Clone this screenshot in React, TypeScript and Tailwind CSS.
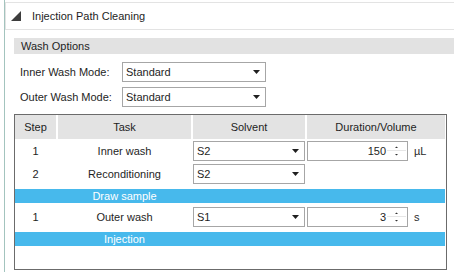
import React from 'react';

const Caret: React.FC = () => (
    <svg width="7" height="4" viewBox="0 0 7 4" className="shrink-0">
        <path d="M0 0H7L3.5 4Z" fill="#1f1f1f" />
    </svg>
);

const Select: React.FC<{ value: string; className?: string }> = ({ value, className = '' }) => (
    <div className={`h-[20px] border border-[#a6a6a6] bg-white flex items-center justify-between pl-[3px] pr-[5px] ${className}`}>
        <span>{value}</span>
        <Caret />
    </div>
);

const Spinner: React.FC<{ value: string; unit: string }> = ({ value, unit }) => (
    <div className="flex items-center">
        <div className="relative w-[101px] h-[20px] border border-[#a6a6a6] bg-white flex items-center justify-end pr-[21px]">
            <span>{value}</span>
            <div className="absolute right-[1px] top-[8px] w-[19px] h-px bg-[#e6e6e6]" />
            <svg width="5" height="14" viewBox="0 0 5 14" className="absolute right-[8px] top-[2px]">
                <path d="M1 4H4L2.5 2.5Z" fill="#333" />
                <path d="M1 10H4L2.5 11.5Z" fill="#333" />
            </svg>
        </div>
        <span className="ml-[6px] text-[#2b2b2b]">{unit}</span>
    </div>
);

const Band: React.FC<{ label: string }> = ({ label }) => (
    <div className="h-[14px] bg-[#47b9ec] text-white flex items-center leading-none">
        <div className="w-[43px]" />
        <div className="w-[133px] text-center">{label}</div>
    </div>
);

export default function App() {
    return (
        <div
            className="w-[454px] h-[272px] bg-white flex overflow-hidden text-[11px] text-[#1e1e1e]"
            style={{ fontFamily: '"Liberation Sans", Arial, sans-serif' }}
        >
            <div className="ml-[4px] w-px bg-[#a3c4be]" />
            <div className="flex-1 flex flex-col">
                {/* section header */}
                <div className="mt-[2px] h-[28px] border-t border-b border-l border-[#e3e3e3] flex items-center pl-[5px]">
                    <svg width="10" height="10" viewBox="0 0 10 10">
                        <path d="M10 0V10H0Z" fill="#3d3d3d" />
                    </svg>
                    <span className="ml-[11px]">Injection Path Cleaning</span>
                </div>

                <div className="mt-[8px] ml-[9px] h-[16px] bg-[#e2e2e2] flex items-center pl-[7px]">
                    Wash Options
                </div>

                <div className="mt-[8px] pl-[15px] flex flex-col gap-[5px]">
                    <div className="flex items-center">
                        <span className="w-[102px]">Inner Wash Mode:</span>
                        <Select value="Standard" className="w-[144px]" />
                    </div>
                    <div className="flex items-center">
                        <span className="w-[102px]">Outer Wash Mode:</span>
                        <Select value="Standard" className="w-[144px]" />
                    </div>
                </div>

                {/* step table */}
                <div className="mt-[7px] ml-[9px] w-[433px] h-[156px] border border-[#6b6b6b] pr-px">
                    <div className="flex gap-[2px] h-[24px]">
                        <div className="w-[41px] bg-[#e3e3e3] flex items-center justify-center">Step</div>
                        <div className="w-[133px] bg-[#e3e3e3] flex items-center justify-center">Task</div>
                        <div className="w-[112px] bg-[#e3e3e3] flex items-center justify-center">Solvent</div>
                        <div className="w-[138px] bg-[#e3e3e3] flex items-center justify-center">Duration/Volume</div>
                    </div>

                    <div className="mt-[2px] flex gap-[2px] items-center">
                        <div className="w-[41px] text-center">1</div>
                        <div className="w-[133px] text-center">Inner wash</div>
                        <Select value="S2" className="w-[112px]" />
                        <Spinner value="150" unit="µL" />
                    </div>
                    <div className="mt-[3px] flex gap-[2px] items-center">
                        <div className="w-[41px] text-center">2</div>
                        <div className="w-[133px] text-center">Reconditioning</div>
                        <Select value="S2" className="w-[112px]" />
                    </div>

                    <div className="mt-[5px]">
                        <Band label="Draw sample" />
                    </div>

                    <div className="mt-[4px] flex gap-[2px] items-center">
                        <div className="w-[41px] text-center">1</div>
                        <div className="w-[133px] text-center">Outer wash</div>
                        <Select value="S1" className="w-[112px]" />
                        <Spinner value="3" unit="s" />
                    </div>

                    <div className="mt-[5px]">
                        <Band label="Injection" />
                    </div>
                </div>
            </div>
        </div>
    );
}
